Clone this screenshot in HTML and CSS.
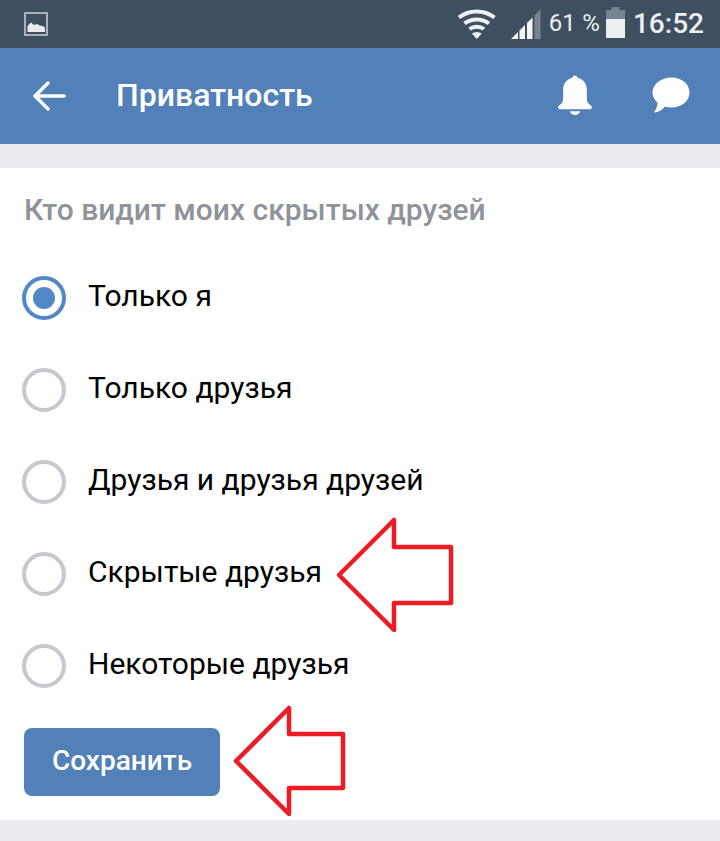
FILE: index.html
```html
<!DOCTYPE html>
<html lang="ru">
<head>
<meta charset="utf-8">
<title>Приватность</title>
<link rel="stylesheet" href="styles.css">
</head>
<body>
<div class="status">
  <svg class="pic" width="24" height="24" viewBox="0 0 24 24"><rect x="1" y="1" width="22" height="22" fill="none" stroke="#c6cbd0" stroke-width="1.6"/><path d="M3.500 20V14L7 10.500 10 13 13 12 16 13.500 20 14.500 21 16.500V20Z" fill="#e9ebed"/></svg>
  <div class="status-right">
    <svg class="wifi" width="40" height="32" viewBox="0 0 40 32"><g fill="none" stroke="#eef0f2" stroke-width="4"><path d="M2 10.500C12 2.500 27 2.500 37.500 10.500"/><path d="M7.500 16.500C14.500 11 25 11 32 16.500"/><path d="M12.500 22C16.500 19 23 19 27 22"/></g><path d="M14.800 26.500C18 24.500 21.500 24.500 24.800 26.500L19.800 32Z" fill="#eef0f2"/></svg>
    <svg class="signal" width="30" height="32" viewBox="0 0 30 32"><path d="M0 32L7 25V32Z" fill="#f2f3f4"/><path d="M8.500 23.500L14 18V32H8.500Z" fill="#f2f3f4"/><path d="M16 16L21.500 10.500V32H16Z" fill="#f2f3f4"/><path d="M23.500 8.500L29.500 2V32H23.500Z" fill="#75848f"/></svg>
    <span class="pct">61 %</span>
    <svg class="batt" width="20" height="32" viewBox="0 0 20 32"><path d="M5.500 0H13.500V3H19V12H0V3H5.500Z" fill="#75848f"/><path d="M0 12H19V31H0Z" fill="#eceef0"/></svg>
    <span class="time">16:52</span>
  </div>
</div>
<header class="bar">
  <svg class="back" width="34" height="30" viewBox="0 0 34 30"><path d="M32 15H3M16 2L3 15 16 28" fill="none" stroke="#fff" stroke-width="3.400" stroke-linecap="round" stroke-linejoin="round"/></svg>
  <h1 class="title">Приватность</h1>
  <svg class="bell" width="36" height="41" viewBox="0 0 38 42" preserveAspectRatio="none"><path d="M19 0.500C21 0.500 21.800 2 22 3.200 28 4.500 31.500 9 31.500 15.500V24C31.500 28 33.500 29.500 36 31.500 37.500 32.800 37 35 35 35H3C1 35 0.500 32.800 2 31.500 4.500 29.500 6.500 28 6.500 24V15.500C6.500 9 10 4.500 16 3.200 16.200 2 17 0.500 19 0.500Z" fill="#fff"/><path d="M13.500 37.200H24.500C23.500 39.800 21.500 41 19 41 16.500 41 14.500 39.800 13.500 37.200Z" fill="#fff"/></svg>
  <svg class="chat" width="38" height="38" viewBox="0 0 38 38"><path d="M19.500 0.500C29.500 0.500 37.500 7 37.500 15.500S29.500 30.500 19.500 30.500C17 30.500 15 30.200 13 29.500 10.500 32.500 7 35 3 35.500 2.200 35.600 2 35 2.500 34.300 4.500 32 5.500 29 5.500 25.500 2.500 23 0.500 19.500 0.500 15.500 0.500 7 9.500 0.500 19.500 0.500Z" fill="#fff"/></svg>
</header>
<main class="card">
  <h2 class="heading">Кто видит моих скрытых друзей</h2>
  <ul class="options">
    <li class="option"><span class="radio on"></span><span class="label">Только я</span></li>
    <li class="option"><span class="radio"></span><span class="label">Только друзья</span></li>
    <li class="option"><span class="radio"></span><span class="label">Друзья и друзья друзей</span></li>
    <li class="option"><span class="radio"></span><span class="label">Скрытые друзья</span></li>
    <li class="option"><span class="radio"></span><span class="label">Некоторые друзья</span></li>
  </ul>
  <button class="save" type="button">Сохранить</button>
</main>
<svg class="callouts" width="720" height="841" viewBox="0 0 720 841"><g fill="none" stroke="#ed1c24" stroke-width="4.500" stroke-linejoin="round"><path d="M339 575L394 520V547H451V603H394V630Z"/><path d="M236 761L289 708V734H343V788H289V814Z"/></g></svg>
</body>
</html>
```
FILE: styles.css
```css
* { box-sizing: border-box; }
html, body { margin: 0; padding: 0; }
body {
  width: 720px;
  height: 841px;
  overflow: hidden;
  position: relative;
  background: #ebedf0;
  font-family: Roboto, "Liberation Sans", sans-serif;
}
.status {
  height: 48px;
  background: #3e5060;
  display: flex;
  align-items: center;
  justify-content: space-between;
  padding: 0 16px 0 24px;
  color: #eceef0;
}
.pic { margin-bottom: 1px; }
.status-right { display: flex; align-items: center; }
.wifi { margin-right: 14px; margin-top: -3px; }
.signal { margin-right: 8px; margin-top: -2px; }
.pct { font-size: 24px; margin-right: 6px; margin-top: -2px; letter-spacing: 0.200px; }
.batt { margin-right: 7px; margin-top: -2px; }
.time { font-size: 28px; font-weight: 500; margin-top: -2px; }
.bar {
  height: 96px;
  background: #5181b8;
  display: flex;
  align-items: center;
  padding: 0 30px 0 32px;
}
.back { flex: none; margin-top: -1px; }
.title {
  margin: -2px 0 0 50px;
  flex: 1;
  font-size: 32px;
  font-weight: 500;
  color: #fff;
}
.bell { margin-right: 58px; margin-top: -1px; }
.chat { margin-top: -1px; margin-left: 1px; }
.card {
  margin-top: 24px;
  height: 652px;
  background: #fff;
  padding: 26px 24px 0 22px;
}
.heading {
  margin: 0 0 0 2px;
  font-size: 30px;
  font-weight: 500;
  line-height: 32px;
  color: #909399;
}
.options { list-style: none; margin: 26px 0 0; padding: 0; }
.option {
  height: 92px;
  display: flex;
  align-items: center;
  font-size: 30px;
  color: #000;
}
.label { padding-bottom: 5px; }
.radio {
  width: 44px;
  height: 44px;
  border-radius: 50%;
  border: 4px solid #c5c8ce;
  margin-right: 22px;
  flex: none;
  position: relative;
}
.radio.on { border-color: #5288c8; }
.radio.on::after {
  content: "";
  position: absolute;
  inset: 7px;
  border-radius: 50%;
  background: #5288c8;
}
.save {
  display: block;
  margin: 16px 0 0 2px;
  width: 196px;
  height: 68px;
  padding: 0 0 3px;
  border: 0;
  border-radius: 8px;
  background: #5181b8;
  color: #fff;
  font-family: inherit;
  font-size: 28px;
  font-weight: 500;
}
.callouts { position: absolute; left: 0; top: 0; pointer-events: none; }
```
